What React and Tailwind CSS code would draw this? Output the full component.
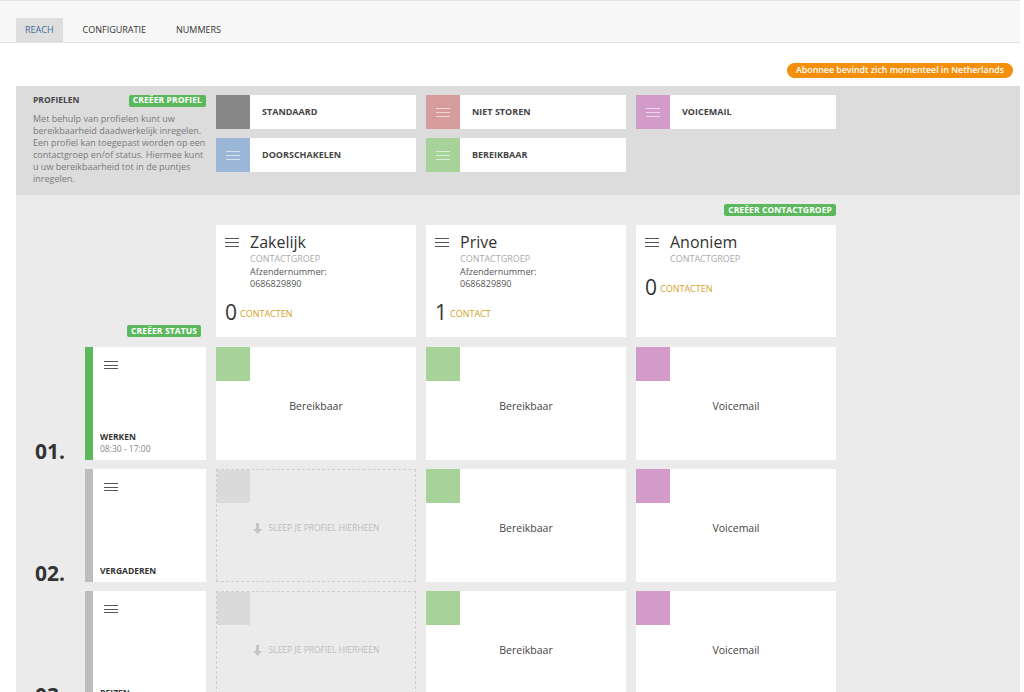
import React from "react"

const PROFILES = [
    { name: "STANDAARD", color: "bg-[#878787]", menu: false },
    { name: "NIET STOREN", color: "bg-[#d69b9b]", menu: true },
    { name: "VOICEMAIL", color: "bg-[#d39bca]", menu: true },
    { name: "DOORSCHAKELEN", color: "bg-[#9bb6d6]", menu: true },
    { name: "BEREIKBAAR", color: "bg-[#a7d39b]", menu: true },
]

const GROUPS = [
    { title: "Zakelijk", number: "0686829890", count: "0", label: "CONTACTEN" },
    { title: "Prive", number: "0686829890", count: "1", label: "CONTACT" },
    { title: "Anoniem", number: null, count: "0", label: "CONTACTEN" },
]

const GREEN = "bg-[#a7d39b]"
const PINK = "bg-[#d39bca]"

const STATUSES = [
    { nr: "01.", name: "WERKEN", time: "08:30 - 17:00", bar: "bg-[#5cb85c]", cells: [{ color: GREEN, text: "Bereikbaar" }, { color: GREEN, text: "Bereikbaar" }, { color: PINK, text: "Voicemail" }] },
    { nr: "02.", name: "VERGADEREN", time: null, bar: "bg-[#bdbdbd]", cells: [null, { color: GREEN, text: "Bereikbaar" }, { color: PINK, text: "Voicemail" }] },
    { nr: "03.", name: "REIZEN", time: null, bar: "bg-[#bdbdbd]", cells: [null, { color: GREEN, text: "Bereikbaar" }, { color: PINK, text: "Voicemail" }] },
]

function Lines({ color, gap = "gap-[3px]" }) {
    return (
        <div className={`flex flex-col w-[14px] ${gap}`}>
            <div className={`h-px ${color}`} />
            <div className={`h-px ${color}`} />
            <div className={`h-px ${color}`} />
        </div>
    )
}

function Badge({ children }) {
    return (
        <span className="inline-flex items-center h-[12px] px-[4px] rounded-[2px] bg-[#5cb85c] text-white text-[8.5px] font-bold leading-none tracking-[0.1px]">
            {children}
        </span>
    )
}

function ProfileCard({ profile }) {
    return (
        <div className="flex h-[34px] bg-white">
            <div className={`w-[34px] h-[34px] flex items-center justify-center ${profile.color}`}>
                {profile.menu && <Lines color="bg-white/60" />}
            </div>
            <span className="ml-[12px] self-center text-[9px] font-bold text-[#444]">{profile.name}</span>
        </div>
    )
}

function GroupCard({ group }) {
    return (
        <div className="h-[112px] bg-white pt-[7px] pl-[9px]">
            <div className="flex items-center">
                <Lines color="bg-[#555]" />
                <span className="ml-[11px] text-[16px] text-[#333] leading-[20px]">{group.title}</span>
            </div>
            <div className="pl-[25px] text-[9px] leading-[12.5px]">
                <div className="text-[#aaa] mt-[1px]">CONTACTGROEP</div>
                {group.number && <div className="text-[#555]">Afzendernummer:</div>}
                {group.number && <div className="text-[#555]">{group.number}</div>}
            </div>
            <div className="flex items-end mt-[11px]">
                <span className="text-[21px] leading-[20px] text-[#333]">{group.count}</span>
                <span className="ml-[3px] mb-[1px] text-[9px] text-[#d2a227]">{group.label}</span>
            </div>
        </div>
    )
}

function Cell({ cell }) {
    if (!cell) {
        return (
            <div className="grid border border-dashed border-[#cfcfcf] bg-[#ebebeb]">
                <div className="col-start-1 row-start-1 self-start justify-self-start w-[33px] h-[33px] bg-[#dadada]" />
                <div className="col-start-1 row-start-1 self-center justify-self-center flex items-center gap-[7px] mt-[6px] text-[8.5px] text-[#bdbdbd]">
                    <svg width="9" height="11" viewBox="0 0 9 11"><path d="M3 0h3v6h3L4.5 11 0 6h3z" fill="#c4c4c4" /></svg>
                    SLEEP JE PROFIEL HIERHEEN
                </div>
            </div>
        )
    }
    return (
        <div className="grid bg-white">
            <div className={`col-start-1 row-start-1 self-start justify-self-start w-[34px] h-[34px] ${cell.color}`} />
            <div className="col-start-1 row-start-1 self-center justify-self-center mt-[6px] text-[10.5px] text-[#444]">{cell.text}</div>
        </div>
    )
}

export default function App() {
    return (
        <div className="w-[1024px] h-[692px] overflow-hidden bg-white font-['Open_Sans',sans-serif]">
            <div className="h-[43px] mr-[4px] bg-[#f7f7f7] border-t border-b border-[#e2e2e2] flex items-end pl-[16px] gap-[10px]">
                <div className="h-[24px] px-[9px] flex items-center bg-[#dedede] text-[9px] text-[#3c6d9d]">REACH</div>
                <div className="h-[24px] px-[10px] flex items-center text-[9px] text-[#333]">CONFIGURATIE</div>
                <div className="h-[24px] px-[10px] flex items-center text-[9px] text-[#333]">NUMMERS</div>
            </div>

            <div className="flex justify-end mr-[11px] mt-[20px] mb-[8px]">
                <span className="h-[15px] px-[9px] flex items-center rounded-full bg-[#f48f0c] text-white text-[8.8px] font-semibold leading-none">
                    Abonnee bevindt zich momenteel in Netherlands
                </span>
            </div>

            <div className="ml-[16px] mr-[4px] bg-[#dcdcdc] h-[109px] pt-[8px] pl-[17px] flex gap-[10px]">
                <div className="w-[173px]">
                    <div className="flex items-center justify-between h-[13px]">
                        <span className="text-[8.5px] font-bold text-[#444]">PROFIELEN</span>
                        <Badge>CREËER PROFIEL</Badge>
                    </div>
                    <p className="mt-[6px] text-[9px] leading-[12px] text-[#7a7a7a] whitespace-nowrap">
                        Met behulp van profielen kunt uw<br />
                        bereikbaarheid daadwerkelijk inregelen.<br />
                        Een profiel kan toegepast worden op een<br />
                        contactgroep en/of status. Hiermee kunt<br />
                        u uw bereikbaarheid tot in de puntjes<br />
                        inregelen.
                    </p>
                </div>
                <div className="grid grid-cols-[200px_200px_200px] gap-x-[10px] gap-y-[9px] content-start pt-[1px]">
                    {PROFILES.map((p) => <ProfileCard key={p.name} profile={p} />)}
                </div>
            </div>

            <div className="ml-[16px] mr-[4px] bg-[#ebebeb] h-[520px] pt-[9px]">
                <div className="w-[820px] flex justify-end">
                    <Badge>CREËER CONTACTGROEP</Badge>
                </div>
                <div className="flex mt-[9px]">
                    <div className="w-[190px] flex items-end justify-end pr-[5px]">
                        <Badge>CREËER STATUS</Badge>
                    </div>
                    <div className="ml-[10px] grid grid-cols-[200px_200px_200px] gap-[10px]">
                        {GROUPS.map((g) => <GroupCard key={g.title} group={g} />)}
                    </div>
                </div>
                <div className="flex flex-col gap-[9px] mt-[10px]">
                    {STATUSES.map((s) => (
                        <div key={s.nr} className="flex h-[113px]">
                            <div className="w-[69px] flex items-end pl-[19px]">
                                <span className="text-[21px] font-bold text-[#333] leading-none -mb-[2px]">{s.nr}</span>
                            </div>
                            <div className="w-[121px] flex bg-white">
                                <div className={`w-[8px] ${s.bar}`} />
                                <div className="flex-1 flex flex-col pl-[7px] pt-[14px] pb-[5px]">
                                    <div className="pl-[4px]"><Lines color="bg-[#555]" gap="gap-[2.5px]" /></div>
                                    <div className="mt-auto text-[8.5px] leading-[12px]">
                                        <div className="font-bold text-[#333]">{s.name}</div>
                                        {s.time && <div className="text-[#888]">{s.time}</div>}
                                    </div>
                                </div>
                            </div>
                            <div className="ml-[10px] grid grid-cols-[200px_200px_200px] gap-[10px]">
                                {s.cells.map((c, i) => <Cell key={i} cell={c} />)}
                            </div>
                        </div>
                    ))}
                </div>
            </div>
        </div>
    )
}
